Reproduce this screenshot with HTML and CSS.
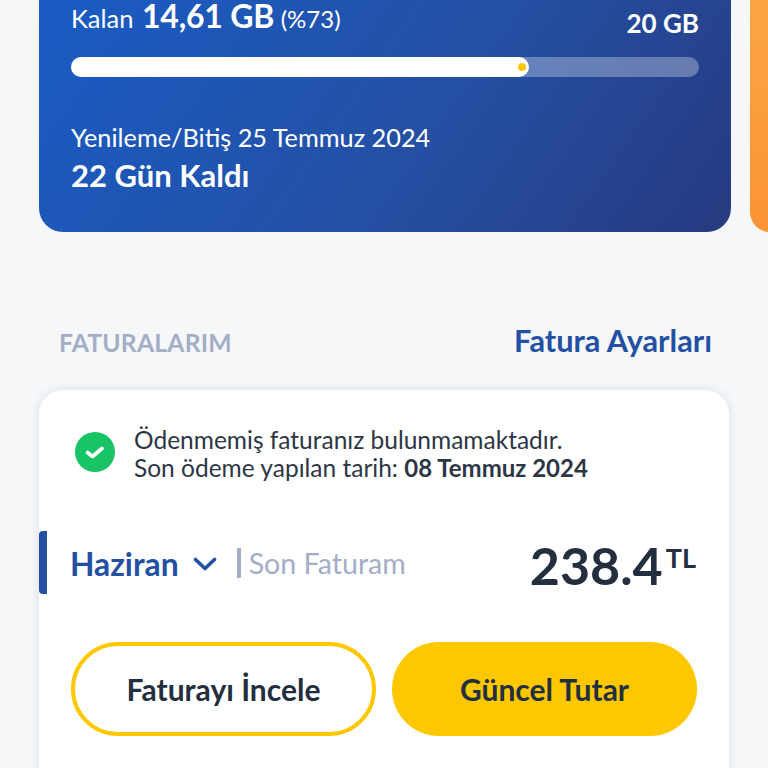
FILE: index.html
```html
<!DOCTYPE html>
<html lang="tr">
<head>
<meta charset="utf-8">
<title>Faturalarım</title>
<link rel="stylesheet" href="styles.css">
</head>
<body>
<main class="screen">
  <section class="carousel">
    <article class="usage-card">
      <div class="usage-top">
        <p class="remaining">Kalan <strong>14,61 GB</strong> <span class="percent">(%73)</span></p>
        <p class="total">20 GB</p>
      </div>
      <div class="bar"><div class="bar-fill"><span class="bar-dot"></span></div></div>
      <p class="renew">Yenileme/Bitiş 25 Temmuz 2024</p>
      <p class="days">22 Gün Kaldı</p>
    </article>
    <div class="next-card"></div>
  </section>

  <header class="section-head">
    <h2>FATURALARIM</h2>
    <a class="settings">Fatura Ayarları</a>
  </header>

  <section class="bill-card">
    <div class="notice">
      <svg class="check" viewBox="0 0 40 40" aria-hidden="true">
        <circle cx="20" cy="20" r="20" fill="#19c467"/>
        <path d="M12.5 20.5l5 4 9.500-8" fill="none" stroke="#fff" stroke-width="3.600" stroke-linecap="round" stroke-linejoin="round"/>
      </svg>
      <p>Ödenmemiş faturanız bulunmamaktadır.<br>Son ödeme yapılan tarih: <b>08 Temmuz 2024</b></p>
    </div>
    <div class="bill-row">
      <span class="month">Haziran</span>
      <svg class="chevron" viewBox="0 0 24 14" aria-hidden="true">
        <path d="M2.500 2.500l9.500 9 9.500-9" fill="none" stroke="#2450a4" stroke-width="3.600" stroke-linecap="round" stroke-linejoin="round"/>
      </svg>
      <span class="last">Son Faturam</span>
      <span class="amount">238.4<sup>TL</sup></span>
    </div>
    <div class="actions">
      <a class="btn btn-outline">Faturayı İncele</a>
      <a class="btn btn-solid">Güncel Tutar</a>
    </div>
  </section>
</main>
</body>
</html>
```
FILE: styles.css
```css
* { box-sizing: border-box; }
html, body { margin: 0; height: 100%; }
body {
  background: #f5f7f9;
  font-family: Lato, "Noto Sans", sans-serif;
  color: #232f3f;
  overflow: hidden;
}
p, h2 { margin: 0; }
.screen { width: 768px; height: 768px; overflow: hidden; }

.carousel {
  display: flex;
  align-items: flex-end;
  gap: 19px;
  height: 232px;
  padding-left: 39px;
  overflow: hidden;
}
.usage-card {
  flex: 0 0 692px;
  height: 232px;
  padding: 0 32px;
  border-radius: 0 0 24px 24px;
  background: linear-gradient(125deg, #1a5cc4 0%, #2450a4 55%, #273a80 100%);
  color: #fff;
}
.next-card {
  flex: 0 0 40px;
  height: 232px;
  border-radius: 0 0 0 20px;
  background: linear-gradient(180deg, #fba545, #fb9434);
}
.usage-top {
  display: flex;
  justify-content: space-between;
  align-items: flex-end;
  height: 38px;
}
.remaining { font-size: 25.500px; line-height: 36px; margin-bottom: 1px; white-space: nowrap; }
.remaining strong { font-size: 32px; font-weight: 700; margin: 0 0 0 2px; letter-spacing: -.2px; }
.percent { font-size: 24px; }
.total { font-size: 26px; font-weight: 700; line-height: 30px; }
.bar {
  height: 20px;
  margin-top: 19px;
  border-radius: 10px;
  background: rgba(255,255,255,.3);
}
.bar-fill {
  display: flex;
  align-items: center;
  justify-content: flex-end;
  width: 458px;
  height: 20px;
  padding-right: 3px;
  border-radius: 10px;
  background: #fff;
}
.bar-dot { width: 8px; height: 8px; border-radius: 50%; background: #fdc800; }
.renew { margin-top: 44px; font-size: 25.300px; line-height: 32px; white-space: nowrap; }
.days { margin-top: 3px; font-size: 31px; font-weight: 700; line-height: 38px; }

.section-head {
  display: flex;
  justify-content: space-between;
  align-items: center;
  height: 36px;
  margin-top: 92px;
  padding: 0 56px 0 59px;
}
.section-head h2 { font-size: 24.700px; font-weight: 700; color: #a3aec6; letter-spacing: .2px; }
.settings { font-size: 30.700px; line-height: 36px; margin-bottom: 2px; font-weight: 700; color: #2450a4; }

.bill-card {
  width: 690px;
  height: 420px;
  margin: 30px 0 0 39px;
  padding-top: 34px;
  border-radius: 24px;
  background: #fff;
  box-shadow: 0 0 10px rgba(30,50,90,.12);
}
.notice {
  display: flex;
  align-items: center;
  gap: 19px;
  height: 56px;
  margin-left: 36px;
}
.check { flex: none; width: 40px; height: 40px; }
.notice p { margin-top: 4px; font-size: 24.500px; line-height: 28px; color: #2c3645; white-space: nowrap; }
.notice b { font-weight: 700; font-size: 24px; }
.bill-row {
  display: flex;
  align-items: center;
  height: 63px;
  margin-top: 51px;
  padding-right: 33px;
  border-left: 8px solid #2450a4;
  border-radius: 4px 0 0 4px;
  padding-left: 24px;
}
.month { font-size: 31.800px; font-weight: 700; color: #2450a4; margin: 2px 0 0 -1px; }
.chevron { width: 24px; height: 14px; margin: 2px 0 0 14px; }
.last {
  margin-left: 20px;
  padding-left: 8px;
  border-left: 4px solid #a3aec6;
  font-size: 28.600px;
  line-height: 30px;
  color: #a3aec6;
}
.amount {
  margin-left: auto;
  margin-top: 6px;
  font-size: 52px;
  font-weight: 700;
  color: #232f3f;
  line-height: 63px;
}
.amount sup { font-size: 27px; line-height: 0; vertical-align: 17px; margin-left: 3px; }
.actions {
  display: flex;
  gap: 16px;
  margin-top: 48px;
  padding-left: 32px;
}
.btn {
  display: flex;
  align-items: center;
  justify-content: center;
  width: 305px;
  height: 94px;
  border-radius: 47px;
  font-size: 30px;
  font-weight: 700;
  color: #232f3f;
}
.btn-outline { border: 4px solid #fdc800; background: #fff; }
.btn-solid { background: #fdc800; }
```
